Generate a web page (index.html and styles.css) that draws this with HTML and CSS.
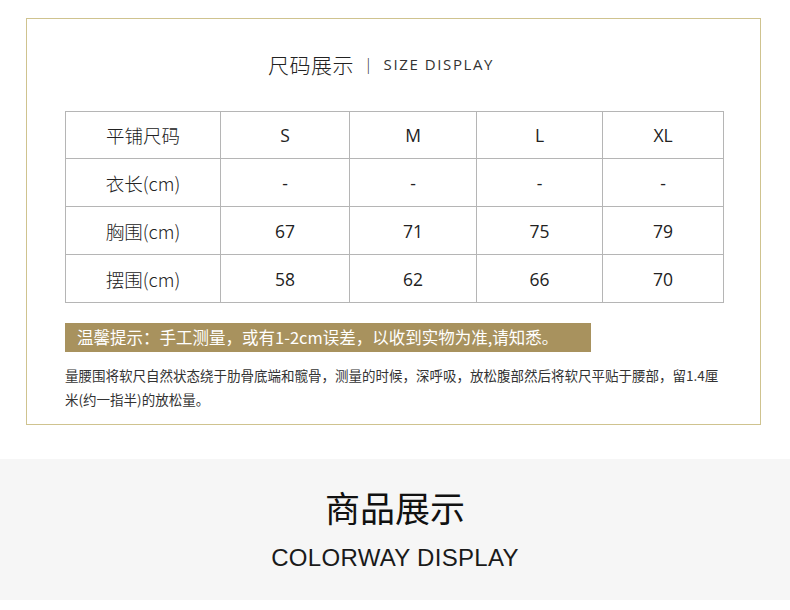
FILE: index.html
```html
<!DOCTYPE html>
<html lang="zh">
<head>
<meta charset="utf-8">
<title>尺码展示</title>
<link rel="stylesheet" href="styles.css">
</head>
<body>
<section class="size-panel">
  <h2 class="size-title"><span class="cn">尺码展示</span><span class="sep">|</span><span class="en">SIZE DISPLAY</span></h2>
  <table class="size-table">
    <tr><td>平铺尺码</td><td>S</td><td>M</td><td>L</td><td>XL</td></tr>
    <tr><td>衣长(cm)</td><td>-</td><td>-</td><td>-</td><td>-</td></tr>
    <tr><td>胸围(cm)</td><td>67</td><td>71</td><td>75</td><td>79</td></tr>
    <tr><td>摆围(cm)</td><td>58</td><td>62</td><td>66</td><td>70</td></tr>
  </table>
  <div class="tip">温馨提示：手工测量，或有1-2cm误差，以收到实物为准,请知悉。</div>
  <p class="note">量腰围将软尺自然状态绕于肋骨底端和髋骨，测量的时候，深呼吸，放松腹部然后将软尺平贴于腰部，留1.4厘米(约一指半)的放松量。</p>
</section>
<section class="colorway">
  <h2 class="cw-cn">商品展示</h2>
  <div class="cw-en">COLORWAY DISPLAY</div>
</section>
</body>
</html>
```

FILE: styles.css
```css
html, body {
  margin: 0;
  padding: 0;
  background: #ffffff;
}
body {
  font-family: "Noto Sans CJK SC", "Open Sans", sans-serif;
  color: #222;
}
.size-panel {
  box-sizing: border-box;
  margin: 18px 29px 0 26px;
  height: 407px;
  border: 1px solid #cfc38f;
  padding: 33px 37px 0 38px;
}
.size-title {
  margin: 0;
  height: 24px;
  padding-right: 26px;
  display: flex;
  align-items: center;
  justify-content: center;
  font-weight: normal;
  line-height: 24px;
}
.size-title .cn {
  font-size: 21px;
  color: #222;
  font-weight: 300;
  letter-spacing: 0.5px;
}
.size-title .sep {
  font-family: "Open Sans", sans-serif;
  font-size: 16px;
  color: #333;
  margin: 0 11px 0 10px;
  font-weight: 300;
}
.size-title .en {
  font-family: "Open Sans", sans-serif;
  font-size: 15px;
  letter-spacing: 1.6px;
  color: #333;
}
.size-table {
  margin-top: 35px;
  width: 659px;
  border-collapse: collapse;
  table-layout: fixed;
}
.size-table td {
  border: 1px solid #b5b5b5;
  height: 47px;
  padding: 0;
  text-align: center;
  font-size: 17.5px;
  color: #222;
  font-family: "Open Sans", "Noto Sans CJK SC", sans-serif;
}
.size-table tr:first-child td { height: 46px; }
.size-table td:first-child {
  width: 154px;
  font-family: "Noto Sans CJK SC", sans-serif;
  font-size: 18.5px;
  font-weight: 300;
}
.size-table td:nth-child(2) { width: 128px; }
.size-table td:nth-child(3) { width: 126px; }
.size-table td:nth-child(4) { width: 125px; }
.tip {
  margin-top: 20px;
  width: 526px;
  height: 29px;
  box-sizing: border-box;
  background: #a8925e;
  color: #ffffff;
  font-size: 16.5px;
  line-height: 29px;
  padding-left: 12px;
  white-space: nowrap;
}
.note {
  margin: 11px 0 0;
  width: 666px;
  font-size: 13.5px;
  line-height: 24px;
  color: #333;
}
.colorway {
  margin-top: 34px;
  height: 141px;
  background: #f6f6f6;
  text-align: center;
  overflow: hidden;
}
.cw-cn {
  margin: 27px 0 0;
  font-size: 35px;
  line-height: 42px;
  font-weight: normal;
  color: #111;
}
.cw-en {
  margin-top: 15px;
  font-family: "Liberation Sans", sans-serif;
  font-size: 24px;
  line-height: 30px;
  letter-spacing: 0.3px;
  color: #1a1a1a;
}
```
